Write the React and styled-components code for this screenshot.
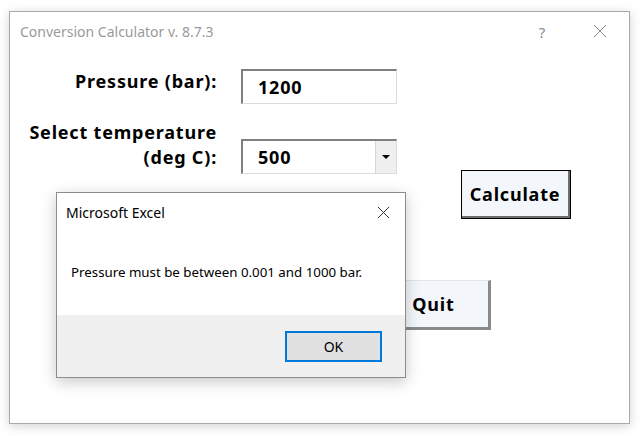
import React from "react";
import styled, { createGlobalStyle } from "styled-components";

const GlobalStyle = createGlobalStyle`
  html, body {
    margin: 0;
    padding: 0;
    background: #ffffff;
  }
  body {
    font-family: "Noto Sans", "Liberation Sans", sans-serif;
  }
`;

const Page = styled.div`
  width: 641px;
  height: 436px;
  padding: 11px 0 0 9px;
  box-sizing: border-box;
`;

const Window = styled.div`
  position: relative;
  width: 621px;
  height: 413px;
  box-sizing: border-box;
  border: 1px solid #a9a9a9;
  background: #ffffff;
  box-shadow: 0 2px 10px rgba(0, 0, 0, 0.18);
`;

const TitleBar = styled.div`
  height: 39px;
  display: flex;
  align-items: center;
  padding-left: 10px;
  color: #9a9a9a;
  font-size: 14px;
`;

const TitleText = styled.span`
  flex: 1;
`;

const TitleButton = styled.span`
  width: 58px;
  text-align: center;
  font-size: 15px;
  color: #8a8a8a;
`;

const Content = styled.div`
  display: flex;
  align-items: flex-start;
  padding-top: 18px;
`;

const Form = styled.div`
  display: grid;
  grid-template-columns: 207px 156px;
  column-gap: 24px;
  row-gap: 16px;
  align-items: start;
  align-content: start;
`;

const Label = styled.div`
  text-align: right;
  font-weight: bold;
  font-size: 18px;
  letter-spacing: 0.8px;
  line-height: 25px;
  color: #000;
`;

const Field = styled.div`
  position: relative;
  height: 35px;
  margin-top: ${(p) => p.offset || 0}px;
  box-sizing: border-box;
  border-top: 2px solid #7f7f7f;
  border-left: 2px solid #7f7f7f;
  border-right: 1px solid #dcdcdc;
  border-bottom: 1px solid #dcdcdc;
  display: flex;
  align-items: center;
  padding-left: 15px;
  font-weight: bold;
  font-size: 18px;
  letter-spacing: 0.8px;
  color: #000;
`;

const DropButton = styled.div`
  position: absolute;
  right: 0;
  top: 0;
  bottom: 0;
  width: 20px;
  background: #efefef;
  border-left: 1px solid #d6d6d6;
  display: flex;
  align-items: center;
  justify-content: center;
`;

const Arrow = styled.div`
  width: 0;
  height: 0;
  border-left: 4px solid transparent;
  border-right: 4px solid transparent;
  border-top: 4px solid #000;
`;

const ButtonColumn = styled.div`
  display: flex;
  flex-direction: column;
  align-items: flex-start;
  padding-top: 101px;
  margin-left: 9px;
`;

const CalcButton = styled.div`
  box-sizing: border-box;
  width: 110px;
  height: 49px;
  margin-left: 55px;
  background: #f3f6fb;
  border: 1px solid #000;
  box-shadow: inset -2px -2px 0 #6e6e6e;
  display: flex;
  align-items: center;
  justify-content: center;
  padding: 0 2px 2px 0;
  font-weight: bold;
  font-size: 18px;
  letter-spacing: 0.8px;
  color: #000;
`;

const QuitButton = styled.div`
  box-sizing: border-box;
  width: 113px;
  height: 50px;
  margin-top: 61px;
  margin-left: -28px;
  background: #f3f6fb;
  border-top: 1px solid #e3e3e3;
  border-left: 1px solid #e3e3e3;
  border-right: 3px solid #8a8a8a;
  border-bottom: 3px solid #8a8a8a;
  display: flex;
  align-items: center;
  justify-content: center;
  font-weight: bold;
  font-size: 18px;
  letter-spacing: 0.8px;
  color: #000;
`;

const Dialog = styled.div`
  position: absolute;
  left: 46px;
  top: 180px;
  width: 350px;
  height: 186px;
  box-sizing: border-box;
  border: 1px solid #8c8c8c;
  background: #ffffff;
  box-shadow: 0 4px 14px rgba(0, 0, 0, 0.22);
  display: flex;
  flex-direction: column;
`;

const DialogHeader = styled.div`
  height: 38px;
  display: flex;
  align-items: center;
  padding-left: 9px;
  font-size: 14px;
  color: #000;
`;

const DialogClose = styled.span`
  margin-left: auto;
  width: 44px;
  display: flex;
  justify-content: center;
`;

const DialogBody = styled.div`
  flex: 1;
  padding: 32px 0 0 14px;
  font-size: 13.3px;
  color: #000;
`;

const DialogFooter = styled.div`
  height: 62px;
  background: #f0f0f0;
  display: flex;
  justify-content: flex-end;
  align-items: flex-start;
  padding: 16px 23px 0 0;
  box-sizing: border-box;
`;

const OkButton = styled.div`
  width: 97px;
  height: 31px;
  box-sizing: border-box;
  border: 2px solid #0078d7;
  background: #e1e1e1;
  display: flex;
  align-items: center;
  justify-content: center;
  font-size: 14px;
  color: #000;
`;

const CloseIcon = ({ size = 14, color = "#8a8a8a" }) => (
  <svg width={size} height={size} viewBox="0 0 14 14">
    <path d="M1 1 L13 13 M13 1 L1 13" stroke={color} strokeWidth="1" fill="none" />
  </svg>
);

export default function App() {
  return (
    <>
      <GlobalStyle />
      <Page>
        <Window>
          <TitleBar>
            <TitleText>Conversion Calculator v. 8.7.3</TitleText>
            <TitleButton>?</TitleButton>
            <TitleButton>
              <CloseIcon />
            </TitleButton>
          </TitleBar>
          <Content>
            <Form>
              <Label>Pressure (bar):</Label>
              <Field>1200</Field>
              <Label>
                Select temperature
                <br />
                (deg C):
              </Label>
              <Field offset={19}>
                500
                <DropButton>
                  <Arrow />
                </DropButton>
              </Field>
            </Form>
            <ButtonColumn>
              <CalcButton>Calculate</CalcButton>
              <QuitButton>Quit</QuitButton>
            </ButtonColumn>
          </Content>
          <Dialog>
            <DialogHeader>
              Microsoft Excel
              <DialogClose>
                <CloseIcon size={13} color="#222" />
              </DialogClose>
            </DialogHeader>
            <DialogBody>Pressure must be between 0.001 and 1000 bar.</DialogBody>
            <DialogFooter>
              <OkButton>OK</OkButton>
            </DialogFooter>
          </Dialog>
        </Window>
      </Page>
    </>
  );
}
